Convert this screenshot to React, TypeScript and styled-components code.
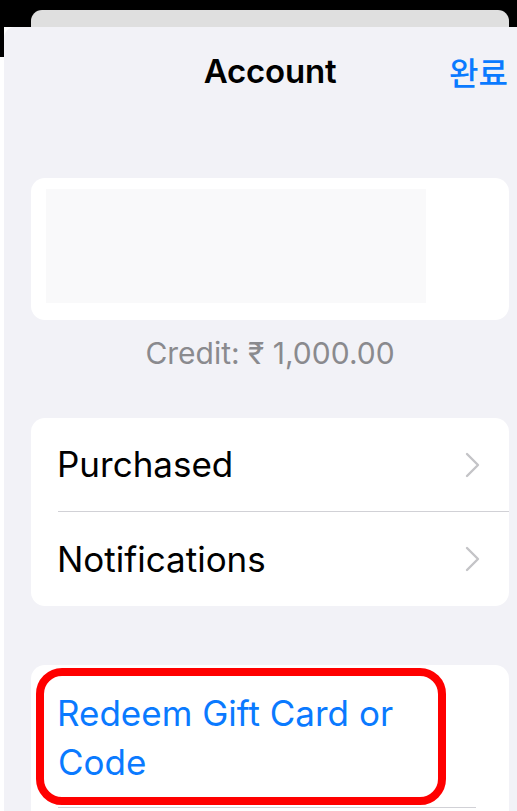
import React from "react";
import styled, { createGlobalStyle } from "styled-components";

const GlobalStyle = createGlobalStyle`
  html, body { margin: 0; padding: 0; background: #ffffff; }
  #root { width: 517px; height: 811px; overflow: hidden; }
`;

const Screen = styled.div`
  width: 517px;
  height: 811px;
  display: flex;
  flex-direction: column;
  overflow: hidden;
  font-family: Inter, "Noto Sans", sans-serif;
`;

const TopBar = styled.div`
  height: 27px;
  flex: none;
  background: #000;
  padding: 10px 8px 0 31px;
  box-sizing: border-box;
  display: flex;
`;

const BackSheet = styled.div`
  width: 478px;
  height: 17px;
  background: #dfdfdf;
  border-radius: 11px 11px 0 0;
`;

const Body = styled.div`
  flex: 1;
  display: flex;
  min-height: 0;
`;

const EdgeStrip = styled.div`
  width: 4px;
  flex: none;
  background: linear-gradient(#000 0 30px, #ffffff 30px);
`;

const Sheet = styled.div`
  flex: 1;
  background: #f2f2f7;
  border-top-left-radius: 11px;
  padding: 0 8px 0 27px;
  display: flex;
  flex-direction: column;
  & > * { flex-shrink: 0; }
`;

const NavBar = styled.div`
  height: 88px;
  display: grid;
  grid-template-columns: 1fr auto 1fr;
  align-items: center;
`;

const Title = styled.div`
  grid-column: 2;
  font-size: 33px;
  font-weight: 600;
  color: #000;
  letter-spacing: -0.2px;
`;

const DoneButton = styled.div`
  grid-column: 3;
  justify-self: end;
  margin-right: 1px;
  font-family: "Noto Sans CJK KR", sans-serif;
  font-size: 32px;
  font-weight: 500;
  color: #0a7aff;
`;

const Card = styled.div<{ $top: number }>`
  margin-top: ${(p) => p.$top}px;
  background: #ffffff;
  border-radius: 14px;
  position: relative;
`;

const ProfileCard = styled(Card)`
  height: 142px;
  box-sizing: border-box;
  padding: 11px 15px;
`;

const ProfilePlaceholder = styled.div`
  width: 380px;
  height: 114px;
  background: #f9f9fa;
`;

const Credit = styled.div`
  padding-top: 16px;
  height: 98px;
  box-sizing: border-box;
  text-align: center;
  font-size: 30px;
  line-height: 34px;
  color: #8a8a8e;
`;

const Row = styled.div<{ $divider?: boolean }>`
  height: 94px;
  margin-left: 27px;
  padding-right: 28px;
  display: flex;
  align-items: center;
  justify-content: space-between;
  box-sizing: border-box;
  border-bottom: ${(p) => (p.$divider ? "1px solid #d1d1d6" : "none")};
`;

const RowLabel = styled.span<{ $blue?: boolean }>`
  margin-left: -1px;
  font-size: 35px;
  line-height: 49px;
  color: ${(p) => (p.$blue ? "#0a7aff" : "#000")};
`;

const TallRow = styled.div`
  margin-left: 27px;
  padding: 24px 28px 20px 0;
  border-bottom: 1px solid #d1d1d6;
  width: 390px;
`;

const Highlight = styled.div`
  position: absolute;
  left: 5px;
  top: 3px;
  width: 410px;
  height: 137px;
  box-sizing: border-box;
  border: 8px solid #ff0000;
  border-radius: 26px;
  pointer-events: none;
`;

const Chevron = () => (
  <svg width="16" height="26" viewBox="0 0 16 26" fill="none">
    <path d="M2 2 L13 13 L2 24" stroke="#c4c4c7" strokeWidth="2.4" strokeLinecap="round" strokeLinejoin="round" />
  </svg>
);

export default function App() {
  return (
    <>
      <GlobalStyle />
      <Screen>
        <TopBar>
          <BackSheet />
        </TopBar>
        <Body>
          <EdgeStrip />
          <Sheet>
            <NavBar>
              <Title>Account</Title>
              <DoneButton>완료</DoneButton>
            </NavBar>
            <ProfileCard $top={63}>
              <ProfilePlaceholder />
            </ProfileCard>
            <Credit>Credit: ₹ 1,000.00</Credit>
            <Card $top={0}>
              <Row $divider>
                <RowLabel>Purchased</RowLabel>
                <Chevron />
              </Row>
              <Row>
                <RowLabel>Notifications</RowLabel>
                <Chevron />
              </Row>
            </Card>
            <Card $top={59}>
              <TallRow>
                <RowLabel $blue>Redeem Gift Card or Code</RowLabel>
              </TallRow>
              <Row />
              <Highlight />
            </Card>
          </Sheet>
        </Body>
      </Screen>
    </>
  );
}
